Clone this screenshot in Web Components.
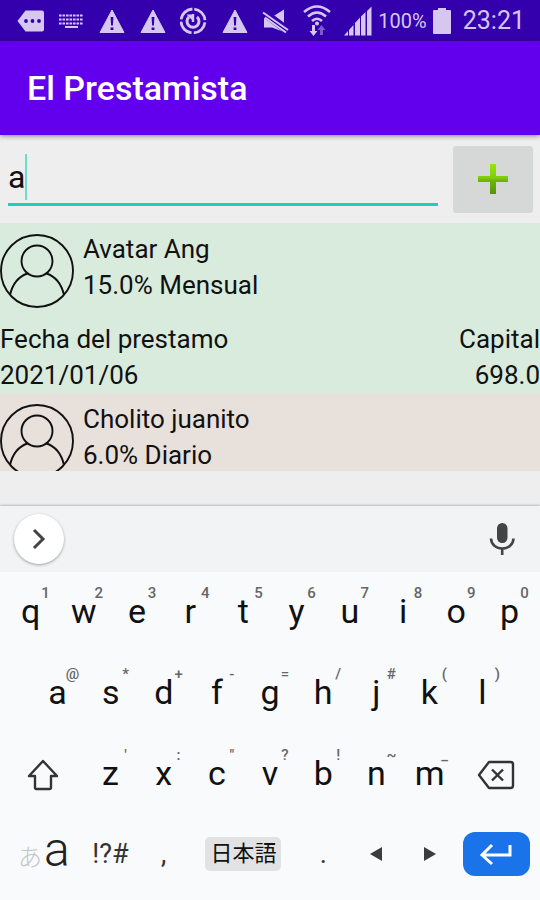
<!DOCTYPE html>
<html lang="es">
<head>
<meta charset="utf-8">
<meta name="viewport" content="width=device-width, initial-scale=1">
<title>El Prestamista</title>
<style>
html, body { margin: 0; height: 100%; }
body { font-family: Roboto, "Noto Sans CJK JP", sans-serif; background: #eee; color: #111; }
</style>
</head>
<body>
<loan-app></loan-app>
<script>
const define = (name, html, setup) => {
  const template = document.createElement('template');
  template.innerHTML = html;
  customElements.define(name, class extends HTMLElement {
    constructor() {
      super();
      this.attachShadow({ mode: 'open' }).append(template.content.cloneNode(true));
    }
    connectedCallback() { if (setup) setup(this, this.shadowRoot); }
  });
};

const warning = '<svg viewBox="0 0 28 32"><path d="M14 5 26 27.500H2Z" fill="currentColor" stroke="currentColor" stroke-linejoin="round"/><path d="M12.600 12h2.800l-.5 8.500h-1.800zM12.600 22.500h2.800V25h-2.800z" fill="#3400ae"/></svg>';

define('status-bar', `
<style>
:host { display: flex; align-items: center; justify-content: space-between; height: 41px; padding: 0 15px 0 16px; box-sizing: border-box; background: #3400ae; color: #d5c7f0; }
.icons, .info { display: flex; align-items: center; }
.icons { gap: 13px; }
.info { gap: 6px; }
svg { display: block; width: 28px; height: 32px; }
svg.battery { width: 18px; height: 28px; }
.level { font-size: 20px; line-height: 32px; }
time { font-size: 25px; line-height: 32px; margin-left: 6px; }
</style>
<div class="icons">
<svg viewBox="0 0 28 32"><path d="M9.500 5.500H26q2 0 2 2v17q0 2-2 2H9.500L1.500 16Z" fill="currentColor"/><g fill="#3400ae"><circle cx="10" cy="16" r="1.900"/><circle cx="16.500" cy="16" r="1.900"/><circle cx="23" cy="16" r="1.900"/></g></svg>
<svg viewBox="0 0 28 32"><g stroke="currentColor" stroke-width="2"><path d="M2 10.500h24M2 14.500h24M2 18.500h24" stroke-dasharray="2.600 .9"/><path d="M8 22h13" stroke-width="2"/></g></svg>
${warning}${warning}
<svg viewBox="0 0 28 32"><g fill="none" stroke="currentColor"><circle cx="13" cy="16" r="12" stroke-width="2.800" stroke-dasharray="16.500 2.350" transform="rotate(-84 13 16)"/><path d="M9 11.800a6 6 0 1 0 8 0" stroke-width="3"/><path d="M13 9v8" stroke-width="2.400"/></g><path d="M6.500 9.500h5.500v5.500z" fill="currentColor"/></svg>
${warning}
<svg viewBox="0 0 28 32"><path d="M2 12h8l12-7.500V27L10 22.500H2z" fill="currentColor"/><path d="M-1 5.500 27 26.500" stroke="#3400ae" stroke-width="8"/><path d="M1 7.500 26 25" stroke="currentColor" stroke-width="2"/><path d="M3 12.500 24 27.500" stroke="currentColor" stroke-width="2"/></svg>
<svg viewBox="0 0 28 32"><g fill="none" stroke="currentColor" stroke-width="2.600"><path d="M1 7q13-11 26 0M5 11.500q9-8 18 0M9 16q5-4.500 10 0"/></g><circle cx="14" cy="18.500" r="2" fill="currentColor"/><path d="M9 20h3v6h2.500L10.500 31 6.500 26H9z" fill="currentColor"/><path d="M17 30h3v-5h2.500L18.500 20 14.500 25H17z" fill="currentColor" opacity=".45"/></svg>
<svg viewBox="0 0 28 32"><path d="M0 30.500 4 26v4.500zM5 30.500V25l4.500-5v10.500zM11 30.500V18l5-5.500v18zM17 30.500V11.500L21.500 7v23.500zM23 30.500V6l4.500-4.500v29z" fill="currentColor"/></svg>
</div>
<div class="info"><span class="level">100%</span>
<svg class="battery" viewBox="0 0 18 28"><path d="M5 1h8v2h4q1 0 1 1v22q0 1-1 1H1q-1 0-1-1V4q0-1 1-1h4z" fill="currentColor"/></svg>
<time>23:21</time></div>`);

define('app-bar', `
<style>
:host { display: flex; align-items: center; height: 94px; padding: 0 27px; background: #6200ee; color: #fff; box-shadow: 0 1px 5px rgba(0,0,0,.45); position: relative; z-index: 1; }
h1 { margin: 0; font-size: 34px; line-height: 40px; font-weight: 500; }
</style><h1><slot></slot></h1>`);

define('search-row', `
<style>
:host { display: flex; align-items: center; gap: 15px; height: 88px; padding: 0 7px 0 8px; box-sizing: border-box; }
.field { flex: 1; display: flex; align-items: center; height: 54px; border-bottom: 3px solid #1fcfbc; box-sizing: border-box; padding-bottom: 2px; cursor: text; }
input { border: 0; outline: 0; padding: 0; background: none; color: #111; caret-color: transparent; font: 32px/40px Roboto, sans-serif; field-sizing: content; min-width: 0; }
.caret { width: 2px; height: 46px; background: #6cdccf; }
button { width: 80px; height: 67px; margin: 0; border: 0; border-radius: 3px; background: #d6d8d7; padding: 0; display: grid; place-items: center; }
svg { width: 30px; height: 30px; }
</style>
<label class="field"><input type="text" value="a" aria-label="Buscar"><span class="caret"></span></label>
<button type="button" aria-label="Agregar"><svg viewBox="0 0 30 30"><defs><linearGradient id="g" x2="0" y2="1"><stop stop-color="#91e808"/><stop offset=".45" stop-color="#83cd0b"/><stop offset=".55" stop-color="#70b408"/><stop offset="1" stop-color="#55950a"/></linearGradient></defs><path d="M12 0h6v12h12v6H18v12h-6V18H0v-6h12z" fill="url(#g)"/></svg></button>`);

define('loan-item', `
<style>
:host { display: block; background: var(--tone, #d9ebdd); font-size: 26px; line-height: 36px; }
header { display: flex; gap: 9px; height: 98px; padding-top: 8px; box-sizing: border-box; }
svg { width: 74px; height: 74px; margin-top: 3px; flex: none; }
.details { display: flex; justify-content: space-between; }
</style>
<header><svg viewBox="0 0 74 74" fill="none" stroke="#111" stroke-width="1.900"><circle cx="37" cy="37" r="36"/><circle cx="37" cy="27" r="15.500"/><path d="M10 61C13 48 20 42 27.500 39.500M46.500 39.500C54 42 61 48 64 61"/></svg>
<div><slot name="name"></slot><slot name="rate"></slot></div></header>
<div class="details"><slot></slot></div>`);

const icons = {
  shift: '<svg width="34" height="34" viewBox="0 0 34 34"><path d="M16 3 2 18H8v11.500q0 1.500 1.500 1.500h13q1.500 0 1.500-1.500V18h6Z" fill="none" stroke="#333" stroke-width="2.400" stroke-linejoin="round"/></svg>',
  erase: '<svg width="38" height="32" viewBox="0 0 38 32"><path d="M12 3h21.500q2.500 0 2.500 2.500v21q0 2.500-2.500 2.500H12L2 16Z M15 10.500 26 21.500M26 10.500 15 21.500" fill="none" stroke="#333" stroke-width="2.400" stroke-linejoin="round"/></svg>',
  left: '<svg width="12" height="14" viewBox="0 0 12 14"><path d="M12 0v14L0 7z" fill="#3c3c3c"/></svg>',
  right: '<svg width="12" height="14" viewBox="0 0 12 14"><path d="M0 0v14l12-7z" fill="#3c3c3c"/></svg>',
  enter: '<svg width="34" height="24" viewBox="0 0 34 24"><path d="M31 3v10H4M13 3 3 13l10 9" fill="none" stroke="#fff" stroke-width="3"/></svg>'
};

define('key-cap', `
<style>
:host { display: flex; flex: 2 1 0; min-width: 0; }
:host([wide]) { flex-grow: 3; }
:host([space]) { flex-grow: 4; }
button { flex: 1; min-width: 0; border: 0; margin: 0; padding: 0 0 4px; background: none; position: relative; display: flex; align-items: center; justify-content: center; color: #111; font: 34px/40px Roboto, "Noto Sans CJK JP", sans-serif; }
.hint { position: absolute; left: calc(50% + 5px); width: 20px; top: 12px; text-align: center; font-size: 15px; line-height: 18px; font-weight: 500; color: #666; }
svg { display: block; }
:host([kind=shift]) button, :host([kind=erase]) button { padding-bottom: 0; }
:host([kind=symbols]) button { font-size: 27px; color: #333; }
:host([kind=space]) .face { font-size: 22px; line-height: 34px; padding: 0 5px; border-radius: 5px; background: #e2e2e2; white-space: nowrap; }
:host([kind=enter]) .face { width: 67px; height: 44px; border-radius: 12px; background: #1a73e8; display: grid; place-items: center; }
:host([kind=mode]) .face { display: flex; align-items: baseline; gap: 2px; font-size: 48px; font-weight: 300; color: #222; }
small { font-size: 24px; color: #c4c6c7; }
</style>
<button type="button"><span class="face"></span></button>`, (host, root) => {
  const face = root.querySelector('.face');
  const kind = host.getAttribute('kind');
  if (icons[kind]) {
    face.innerHTML = icons[kind];
    root.querySelector('button').setAttribute('aria-label', kind);
  } else if (kind === 'mode') face.innerHTML = '<small>あ</small>a';
  else face.textContent = host.getAttribute('label');
  const hint = host.getAttribute('hint');
  if (hint) {
    const mark = document.createElement('span');
    mark.className = 'hint';
    mark.textContent = hint;
    root.querySelector('button').append(mark);
  }
});

const keys = (letters, hints) => [...letters].map((c, i) => `<key-cap label="${c}" hint="${hints[i].replace('"', '&quot;')}"></key-cap>`).join('');

define('soft-keyboard', `
<style>
:host { display: block; background: #f9fafc; padding-bottom: 4px; box-shadow: 0 -1px 2px rgba(0,0,0,.22); }
.tools { display: flex; align-items: center; justify-content: space-between; height: 66px; padding: 0 25px 0 14px; background: #f1f3f4; }
button { border: 0; margin: 0; padding: 0; background: none; display: grid; place-items: center; }
.more { width: 50px; height: 50px; border-radius: 50%; background: #fff; box-shadow: 0 1px 3px rgba(0,0,0,.35); }
.row { display: flex; height: 81px; padding: 0 4px; }
.inset { padding: 0 calc(5% + 4px); }
</style>
<div class="tools"><button class="more" type="button" aria-label="Más"><svg width="16" height="22" viewBox="0 0 16 22"><path d="M3 2l9 9-9 9" fill="none" stroke="#444" stroke-width="3"/></svg></button>
<button type="button" aria-label="Voz"><svg width="26" height="34" viewBox="0 0 26 34"><rect x="8" y="1" width="10.500" height="20" rx="5.200" fill="#444"/><path d="M2 16.500C2.500 30 24 30 24.500 16.500M13.200 26.500V33" fill="none" stroke="#444" stroke-width="2.600"/></svg></button></div>
<div class="row">${keys('qwertyuiop', '1234567890')}</div>
<div class="row inset">${keys('asdfghjkl', '@*+-=/#()')}</div>
<div class="row"><key-cap wide kind="shift"></key-cap>${keys('zxcvbnm', `':"?!~_`)}<key-cap wide kind="erase"></key-cap></div>
<div class="row"><key-cap wide kind="mode"></key-cap><key-cap kind="symbols" label="!?#"></key-cap><key-cap kind="symbols" label=","></key-cap><key-cap space kind="space" label="日本語"></key-cap><key-cap kind="symbols" label="."></key-cap><key-cap kind="left"></key-cap><key-cap kind="right"></key-cap><key-cap wide kind="enter"></key-cap></div>`);

define('loan-app', `
<style>
:host { display: flex; flex-direction: column; height: 100vh; }
main { flex: 1; min-height: 0; overflow: hidden; margin-bottom: 35px; }
.end { text-align: right; }
.warm { --tone: #e8e0db; }
loan-item > div { white-space: nowrap; }
</style>
<status-bar></status-bar>
<app-bar>El Prestamista</app-bar>
<search-row></search-row>
<main>
<loan-item><div slot="name">Avatar Ang</div><div slot="rate">15.0% Mensual</div><div>Fecha del prestamo<br>2021/01/06</div><div class="end">Capital<br>698.0</div></loan-item>
<loan-item class="warm"><div slot="name">Cholito juanito</div><div slot="rate">6.0% Diario</div></loan-item>
</main>
<soft-keyboard></soft-keyboard>`);
</script>
</body>
</html>
